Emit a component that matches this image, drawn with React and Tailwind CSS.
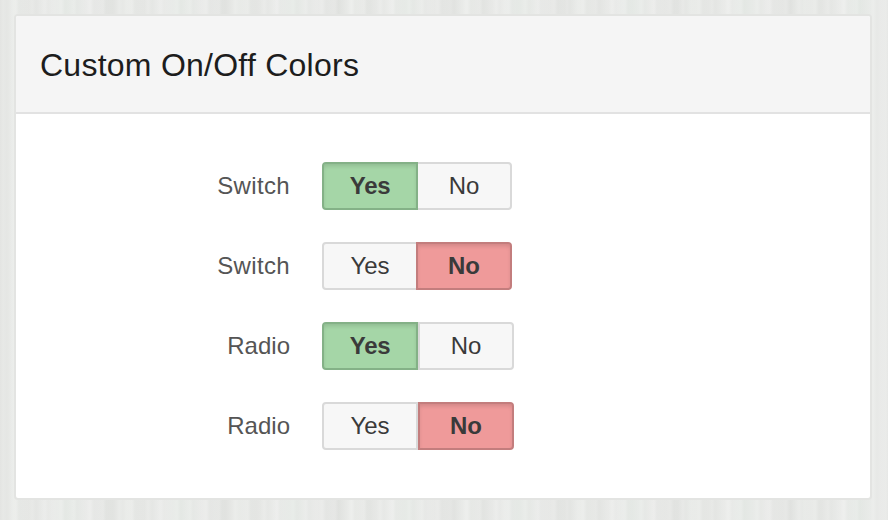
const TONES = {
  green:
    "z-10 border-[#84b187] bg-[#a5d6a7] font-bold tracking-[-0.3px] shadow-[inset_0_3px_4px_-1px_rgba(0,0,0,0.13)]",
  red: "z-10 border-[#c37d7d] bg-[#ef9a9a] font-bold shadow-[inset_0_3px_4px_-1px_rgba(0,0,0,0.13)]",
  off: "border-[#d9d9d9] bg-[#f7f7f7]",
};

function Segment({ tone, className, children }) {
  return (
    <button
      type="button"
      className={`relative flex h-12 w-24 items-center justify-center border-2 text-[24px] leading-none text-[#3a3a3a] ${TONES[tone]} ${className}`}
    >
      {children}
    </button>
  );
}

function Field({ label, value, joined }) {
  return (
    <div className="flex h-12 items-center">
      <span
        className={`mr-8 w-[274px] text-right text-[24px] leading-none text-[#555] ${
          joined ? "tracking-[0.35px]" : "tracking-normal"
        }`}
      >
        {label}
      </span>
      <div className="flex">
        <Segment tone={value === "yes" ? "green" : "off"} className="rounded-l-[4px]">
          Yes
        </Segment>
        <Segment
          tone={value === "no" ? "red" : "off"}
          className={joined ? "-ml-0.5 rounded-r-[4px]" : "rounded-r-[4px]"}
        >
          No
        </Segment>
      </div>
    </div>
  );
}

const GRAIN =
  "bg-[#e9eae8] bg-[repeating-linear-gradient(90deg,rgba(215,217,214,0.35)_0px,rgba(240,243,240,0.3)_13px,rgba(220,222,219,0.3)_31px,rgba(242,243,242,0.3)_52px,rgba(226,234,228,0.4)_67px,rgba(238,238,238,0.3)_89px,rgba(215,217,214,0.35)_113px),repeating-linear-gradient(90deg,rgba(255,255,255,0)_0px,rgba(255,255,255,0.18)_3px,rgba(200,204,200,0.12)_7px,rgba(255,255,255,0.12)_16px,rgba(200,204,200,0.14)_19px,rgba(255,255,255,0)_29px)]";

export default function App() {
  return (
    <div
      className={`h-[520px] w-[888px] overflow-hidden p-3.5 font-['Liberation_Sans',Arial,sans-serif] ${GRAIN}`}
    >
      <section className="h-[486px] w-[858px] overflow-hidden rounded-[4px] border-2 border-[#e3e4e2] bg-white">
        <header className="flex h-[98px] items-center border-b-2 border-[#e2e2e2] bg-[#f5f5f5] pl-6 pt-0.5">
          <h1 className="text-[32px] leading-none tracking-[0.25px] text-[#1d1d1d]">
            Custom On/Off Colors
          </h1>
        </header>
        <div className="flex flex-col gap-8 pt-12">
          <Field label="Switch" value="yes" joined />
          <Field label="Switch" value="no" joined />
          <Field label="Radio" value="yes" />
          <Field label="Radio" value="no" />
        </div>
      </section>
    </div>
  );
}
